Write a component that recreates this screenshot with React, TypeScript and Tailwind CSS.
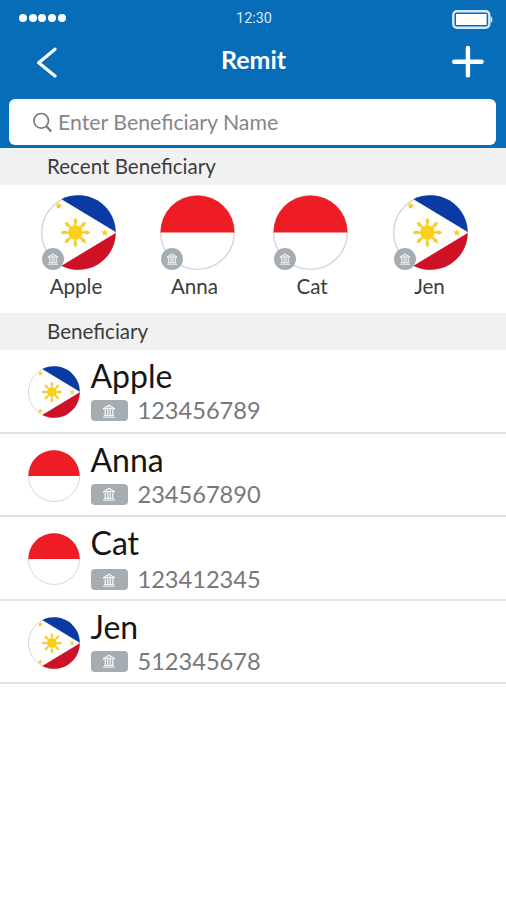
import React, { useState } from 'react';

type Country = 'ph' | 'id';

interface Beneficiary {
  name: string;
  country: Country;
  account: string;
}

const beneficiaries: Beneficiary[] = [
  { name: 'Apple', country: 'ph', account: '123456789' },
  { name: 'Anna', country: 'id', account: '234567890' },
  { name: 'Cat', country: 'id', account: '123412345' },
  { name: 'Jen', country: 'ph', account: '512345678' },
];

// horizontal placement of each recent contact and its label
const recentLayout = ['ml-[41px]', 'ml-[44px]', 'ml-[38px]', 'ml-[45px]'];
const labelOffset = ['pr-[5px]', 'pr-[6px]', 'pl-[3px]', 'pr-[2px]'];

// vertical placement of the account line in each row
const accountOffset = ['mt-[4px]', 'mt-[4px]', 'mt-[6px]', 'mt-[4px]'];

const sunRays = [0, 45, 90, 135, 180, 225, 270, 315];

function Flag({ country, className }: { country: Country; className: string }) {
  if (country === 'id') {
    return (
      <svg viewBox="0 0 75 75" className={className}>
        <circle cx="37.5" cy="37.5" r="36.8" fill="#fff" stroke="#d3d3d5" strokeWidth="1.3" />
        <path d="M0.5 37.5a37 37 0 0 1 74 0z" fill="#ee1c25" />
      </svg>
    );
  }

  return (
    <svg viewBox="0 0 75 75" className={className}>
      <circle cx="37.5" cy="37.5" r="36.8" fill="#fff" stroke="#d3d3d5" strokeWidth="1.3" />
      <path d="M20.5 4.3A37.2 37.2 0 0 1 74.7 37z" fill="#0a3aa3" />
      <path d="M20.5 70.7A37.2 37.2 0 0 0 74.7 38z" fill="#ce1127" />
      <g fill="#f6cd2c">
        <circle cx="34.4" cy="37.5" r="7.3" fill="#fad018" />
        {sunRays.map((angle) => (
          <path
            key={angle}
            d="M33.7 31L32.4 25.6L34.4 22.4L36.4 25.6L35.1 31z"
            transform={`rotate(${angle} 34.4 37.5)`}
          />
        ))}
        <path d="M17.8 7.3l1 2.1 2.4.3-1.8 1.7.4 2.4-2-1.1-2.2 1.1.4-2.4-1.7-1.7 2.4-.3z" />
        <path d="M17.8 61.3l1 2.1 2.4.3-1.8 1.7.4 2.4-2-1.1-2.2 1.1.4-2.4-1.7-1.7 2.4-.3z" />
        <path d="M63.8 34.2l1 2.1 2.4.3-1.8 1.7.4 2.4-2-1.1-2.2 1.1.4-2.4-1.7-1.7 2.4-.3z" />
      </g>
    </svg>
  );
}

function BankIcon({ className }: { className: string }) {
  return (
    <svg viewBox="0 0 14 14" className={className} fill="none" stroke="#fff">
      <path d="M1 4.8L7 1l6 3.8z" fill="#fff" fillOpacity="0.35" strokeWidth="1" strokeLinejoin="round" />
      <path d="M3.2 5.5v6M5.8 5.5v6M8.2 5.5v6M10.8 5.5v6" strokeWidth="1.1" />
      <path d="M2 11.6h10M1 13.2h12" strokeWidth="0.9" />
    </svg>
  );
}

function StatusBar() {
  return (
    <div className="grid h-[38px] grid-cols-3 items-center pr-[13px] pl-[19px]">
      <div className="flex gap-[1.7px] pb-[3px]">
        {[1, 2, 3, 4, 5].map((dot) => (
          <svg key={dot} viewBox="0 0 8 8" className="size-2">
            <circle cx="4" cy="4" r="4" fill="#fff" />
          </svg>
        ))}
      </div>
      <span className="pr-[4px] text-center font-['Roboto',sans-serif] text-[14.4px] text-[#d9e9f5]">12:30</span>
      <svg viewBox="0 0 41 19" className="h-[19px] w-[41px] justify-self-end">
        <rect x="1.3" y="1.3" width="36" height="16.4" rx="3.5" fill="none" stroke="#d5e9f8" strokeWidth="2.4" />
        <rect x="4" y="4" width="30.6" height="11" fill="#fff" />
        <path d="M38.5 6q2 1.2 2 3.5t-2 3.5z" fill="#d5e9f8" />
      </svg>
    </div>
  );
}

function SectionTitle({ children }: { children: React.ReactNode }) {
  return (
    <h2 className="flex h-[37px] items-center bg-[#f1f1f1] pl-[47px] text-[20.6px] leading-[25px] text-[#3c3c3c]">
      {children}
    </h2>
  );
}

export default function App() {
  const [query, setQuery] = useState('');

  const filtered = beneficiaries.filter((item) =>
    item.name.toLowerCase().includes(query.toLowerCase())
  );

  return (
    <main className="min-h-[900px] w-[506px] bg-white font-['Lato',sans-serif]">
      <header className="h-[148px] bg-[#076db8]">
        <StatusBar />
        <div className="grid h-[61px] grid-cols-3 items-start pr-[22px] pl-[36px]">
          <button type="button" aria-label="Back" className="mt-[9px] w-[32px]">
            <svg viewBox="0 0 22 32" className="h-[32px] w-[22px]" fill="none" stroke="#fff" strokeWidth="3.2">
              <path d="M19 2.2L2.7 15.7L19 29" strokeLinecap="round" strokeLinejoin="round" />
            </svg>
          </button>
          <h1 className="mt-[3px] pr-[13px] text-center text-[25px] font-bold text-white">Remit</h1>
          <button type="button" aria-label="Add beneficiary" className="mt-[7px] justify-self-end">
            <svg viewBox="0 0 32 34" className="h-[34px] w-[32px]" stroke="#fff" strokeWidth="4.4" strokeLinecap="round">
              <path d="M2.2 16.7h27.4M15.9 3v27.4" />
            </svg>
          </button>
        </div>
        <label className="mx-[9px] flex h-[46px] w-[487px] items-center rounded-[6px] bg-white pl-[23px]">
          <svg viewBox="0 0 21 21" className="size-[21px]" fill="none" stroke="#77787b" strokeWidth="1.6">
            <circle cx="9.2" cy="8.8" r="7.3" />
            <path d="M14.3 14.2l5 5.3" strokeWidth="2.2" />
          </svg>
          <input
            type="text"
            value={query}
            onChange={(e) => setQuery(e.target.value)}
            placeholder="Enter Beneficiary Name"
            className="ml-[5px] w-[400px] pt-[2px] text-[21.3px] text-[#333] outline-none placeholder:text-[#85868a]"
          />
        </label>
      </header>

      <SectionTitle>Recent Beneficiary</SectionTitle>
      <section className="flex h-[128px] pt-[10px]">
        {beneficiaries.map((item, index) => (
          <div key={item.name} className={`w-[75px] ${recentLayout[index]}`}>
            <div className="relative">
              <Flag country={item.country} className="size-[75px]" />
              <span className="absolute bottom-0 left-[1px] flex size-[22px] items-center justify-center rounded-full bg-[#a5adb3]">
                <BankIcon className="size-[12px]" />
              </span>
            </div>
            <p className={`mt-[2px] text-center text-[20.6px] leading-[28px] text-[#3c3c3c] ${labelOffset[index]}`}>
              {item.name}
            </p>
          </div>
        ))}
      </section>

      <SectionTitle>Beneficiary</SectionTitle>
      <ul>
        {filtered.map((item, index) => (
          <li key={item.name} className="flex h-[83.6px] border-b-2 border-[#e3e3e4] pl-[28px]">
            <Flag country={item.country} className="mt-[16px] size-[52px]" />
            <div className="ml-[10.5px] pt-[7px]">
              <p className="text-[32px] leading-[38px] text-[#161616]">{item.name}</p>
              <div className={`flex items-center gap-[10px] ${accountOffset[index]}`}>
                <span className="flex h-[21px] w-[37px] items-center justify-center rounded-[4px] bg-[#a5adb3]">
                  <BankIcon className="size-[14px]" />
                </span>
                <span className="-mt-px text-[23.6px] leading-[24px] text-[#77787b]">{item.account}</span>
              </div>
            </div>
          </li>
        ))}
      </ul>
    </main>
  );
}
